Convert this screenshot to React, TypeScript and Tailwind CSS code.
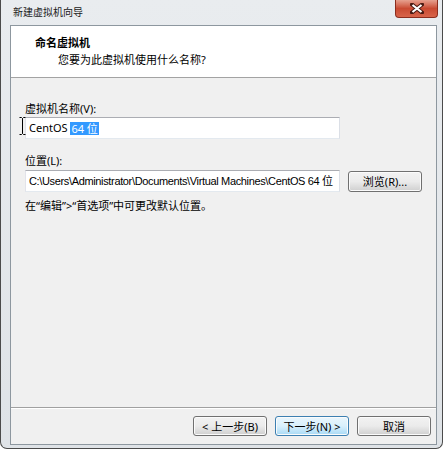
import React from 'react';

const btn =
  'h-[20px] w-[74px] rounded-[3px] border text-[11px] leading-none flex items-center justify-center shadow-[inset_0_0_0_1px_#fbfbfb]';

export default function App() {
  return (
    <div className="relative w-[445px] h-[451px] bg-white overflow-hidden font-['Noto_Sans','Noto_Sans_CJK_SC',sans-serif] text-[11px] text-black">
      {/* window frame */}
      <div className="w-[443px] h-[449px] flex flex-col bg-gradient-to-b from-[#e9ecef] to-[#dfe3e7] border-x border-b border-[#4b4b4b] rounded-b-[7px] pl-[9px] pr-[5px] pb-[3px]">
        <div className="h-[25px] shrink-0 flex items-center pl-[3px] text-[10px] text-[#1a1a1a]">新建虚拟机向导</div>

        <div className="flex-1 flex flex-col border border-[#8d979f] bg-[#f0f0f0]">
          {/* header */}
          <div className="h-[52px] shrink-0 bg-white border-b border-[#a3a3a3] pl-[24px] pt-[8px] leading-[17px]">
            <div className="font-bold">命名虚拟机</div>
            <div className="pl-[23px]">您要为此虚拟机使用什么名称?</div>
          </div>

          {/* body */}
          <div className="flex-1 flex flex-col pl-[14px] pt-[24px] leading-[14px]">
            <div>虚拟机名称(V):</div>
            <div className="mt-[1px] w-[315px] h-[22px] bg-white border border-[#abadb3] border-l-[#e2e3ea] border-r-[#dbdfe6] border-b-[#e3e9ef] flex items-center pl-[3px]">
              <span>CentOS&nbsp;</span>
              <span className="bg-[#3399ff] text-white px-[1px] leading-[13px]">64 位</span>
            </div>

            <div className="mt-[15px]">位置(L):</div>
            <div className="mt-[2px] flex items-end">
              <div className="w-[315px] h-[22px] bg-white border border-[#abadb3] border-l-[#e2e3ea] border-r-[#dbdfe6] border-b-[#e3e9ef] flex items-center pl-[3px] whitespace-nowrap overflow-hidden font-['Liberation_Sans','Noto_Sans_CJK_SC',sans-serif] tracking-[-0.35px]">
                C:\Users\Administrator\Documents\Virtual Machines\CentOS 64 位
              </div>
              <button className={`${btn} ml-[8px] w-[73px] h-[21px] border-[#707070] bg-gradient-to-b from-[#f2f2f2] via-[#ebebeb] to-[#cfcfcf]`}>
                浏览(R)...
              </button>
            </div>

            <div className="mt-[7px]">在“编辑”&gt;“首选项”中可更改默认位置。</div>
          </div>

          {/* footer */}
          <div className="h-[37px] shrink-0 border-t border-[#a0a0a0] shadow-[inset_0_1px_0_#ffffff] flex justify-end items-start pt-[8px] pr-[5px] gap-[8px]">
            <button className={`${btn} border-[#707070] bg-gradient-to-b from-[#f2f2f2] via-[#ebebeb] to-[#cfcfcf]`}>
              &lt; 上一步(B)
            </button>
            <button className={`${btn} border-[#3c7fb1] bg-gradient-to-b from-[#eaf6fd] via-[#d9f0fc] to-[#a7d9f5]`}>
              下一步(N) &gt;
            </button>
            <button className={`${btn} border-[#707070] bg-gradient-to-b from-[#f2f2f2] via-[#ebebeb] to-[#cfcfcf]`}>
              取消
            </button>
          </div>
        </div>
      </div>

      {/* close button */}
      <div className="absolute top-0 left-[395px] w-[43px] h-[18px] rounded-b-[4px] border border-t-0 border-[#8b2d1e] bg-gradient-to-b from-[#e6a08f] via-[#c94a32] to-[#d8644a] flex items-center justify-center">
        <svg width="14" height="11" viewBox="0 0 14 11">
          <path d="M2 1.5 L12 9.5 M12 1.5 L2 9.5" stroke="#4a1a12" strokeWidth="4" strokeLinecap="square" />
          <path d="M2.5 2 L11.5 9 M11.5 2 L2.5 9" stroke="#ffffff" strokeWidth="2.2" />
        </svg>
      </div>

      {/* text cursor */}
      <svg className="absolute left-[19px] top-[117px]" width="7" height="18" viewBox="0 0 7 18">
        <path d="M0.5 0.5 H2.5 L3.5 1.5 L4.5 0.5 H6.5 M3.5 1.5 V16.5 M0.5 17.5 H2.5 L3.5 16.5 L4.5 17.5 H6.5" stroke="#000" strokeWidth="1" fill="none" />
      </svg>
    </div>
  );
}
